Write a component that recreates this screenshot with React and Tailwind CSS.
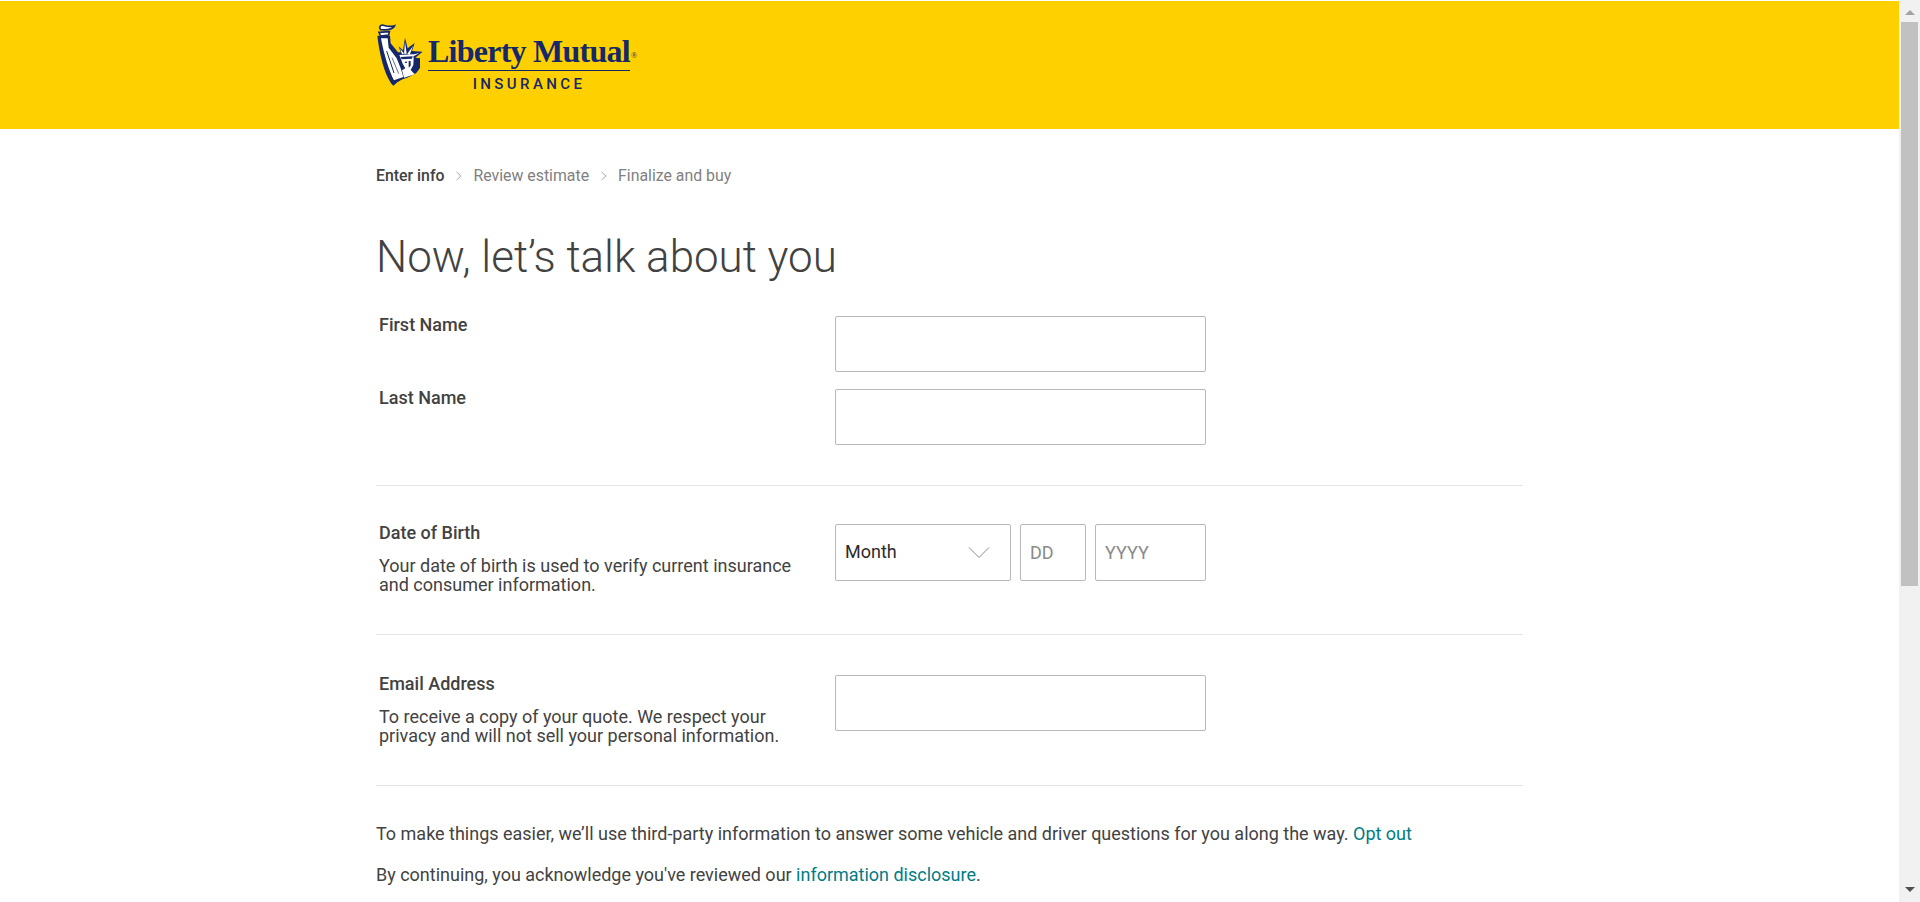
import React from "react";

const NAVY = "#14286b";

const StatueMark = () => (
  <svg width="80" height="75" viewBox="0 0 240 225" className="-ml-[6px] shrink-0">
    {/* shield */}
    <path
      d="M22 62 L60 62 L62 85 L84 112 L92 112 L86 94 L99 106 L105 68 L113 100 L134 84 L126 108 L158 110 L136 128 L150 130 L150 158 C140 178 120 188 100 192 C88 198 78 205 70 212 C48 190 30 130 22 62 Z"
      fill={NAVY}
    />
    {/* raised arm and robe */}
    <path d="M33 70 L53 70 L56 98 L80 130 L92 160 L100 186 L72 196 C58 170 42 120 33 70 Z" fill="#ffffff" />
    <path d="M50 108 L72 174" stroke={NAVY} strokeWidth="3" fill="none" />
    <path d="M66 128 L86 176" stroke={NAVY} strokeWidth="2" fill="none" />
    {/* swoosh at the foot */}
    <path d="M80 203 C98 192 118 188 136 174 C122 194 100 196 74 212 Z" fill="#ffd000" />
    {/* crown rays */}
    <path d="M102 116 L105 80 L110 116 Z" fill="#ffffff" />
    <path d="M112 116 L129 93 L119 120 Z" fill="#ffffff" />
    <path d="M120 121 L148 114 L123 128 Z" fill="#ffffff" />
    <path d="M96 118 L90 100 L102 116 Z" fill="#ffffff" />
    {/* head and shoulders */}
    <path d="M88 120 L128 118 L131 130 L130 150 L122 165 L134 178 L102 188 L96 166 L106 160 L98 146 L92 130 Z" fill="#ffffff" />
    <path d="M92 126 L128 124 L126 131 L95 133 Z" fill={NAVY} />
    <path d="M116 138 L122 138 L122 152 L116 158 Z" fill={NAVY} />
    <path d="M104 140 L112 140 L110 144 L105 144 Z" fill={NAVY} />
    {/* torch */}
    <path d="M27 52 L58 50 L56 60 L32 63 Z" fill="#ffffff" stroke={NAVY} strokeWidth="5" />
    <path
      d="M32 44 C26 36 30 30 38 30 C46 32 56 38 74 32 C70 42 56 46 32 44 Z"
      fill="#ffffff"
      stroke={NAVY}
      strokeWidth="5"
    />
  </svg>
);

const Logo = () => (
  <div className="flex items-start">
    <StatueMark />
    <div className="mt-[20px] -ml-[22px] flex w-[202px] flex-col items-center">
      <span className="w-full whitespace-nowrap border-b border-[#14286b] pb-[2px] font-['Liberation_Serif',serif] text-[32px] leading-[33px] font-bold tracking-[-0.75px] text-[#14286b]">
        Liberty Mutual<sup className="ml-px align-baseline text-[8px] font-normal tracking-normal">®</sup>
      </span>
      <span className="mt-[5px] text-[15px] leading-[16px] font-medium tracking-[3.4px] text-[#14286b]">
        INSURANCE
      </span>
    </div>
  </div>
);

const Chevron = () => (
  <svg width="8" height="12" viewBox="0 0 8 12" fill="none" className="mx-[10.5px]">
    <path d="M1.5 2 L6 6 L1.5 10" stroke="#a8a8a8" strokeWidth="1" />
  </svg>
);

const fieldClass =
  "h-[56px] w-[371px] rounded-[2px] border border-[#b9b9b9] bg-white px-[9px] outline-none";

const Label = ({ children, className = "" }) => (
  <div className={`text-[18px] leading-[20px] font-medium text-[#424242] ${className}`}>{children}</div>
);

const Help = ({ children }) => (
  <p className="mt-[13px] text-[18px] leading-[19px] text-[#424242]">{children}</p>
);

export default function App() {
  return (
    <div className="flex h-screen overflow-hidden bg-white font-['Roboto',sans-serif]">
      <div className="min-w-0 flex-1">
        <header className="mt-px h-[128px] bg-[#ffd000]">
          <div className="mx-auto w-[1147px] pt-[14px]">
            <Logo />
          </div>
        </header>

        <main className="mx-auto w-[1147px]">
          <nav className="mt-[37px] flex items-center text-[15.85px] leading-[20px] text-[#808080]">
            <span className="font-medium text-[#424242]">Enter info</span>
            <Chevron />
            <span>Review estimate</span>
            <Chevron />
            <span>Finalize and buy</span>
          </nav>

          <h1 className="mt-[43px] text-[43.9px] leading-[56px] font-light text-[#424242]">
            Now, let’s talk about you
          </h1>

          <section className="mt-[31px] flex flex-col gap-[17px]">
            <div className="flex">
              <Label className="-mt-[1px] w-[459px] pl-[3px]">First Name</Label>
              <input className={fieldClass} />
            </div>
            <div className="flex">
              <Label className="-mt-[1px] w-[459px] pl-[3px]">Last Name</Label>
              <input className={fieldClass} />
            </div>
          </section>

          <hr className="mt-[40px] border-[#e3e3e3]" />

          <section className="mt-[38px] flex">
            <div className="w-[459px] pl-[3px]">
              <Label className="-mt-[1px]">Date of Birth</Label>
              <Help>
                Your date of birth is used to verify current insurance
                <br />
                and consumer information.
              </Help>
            </div>
            <div className="flex gap-[9px]">
              <div className="flex h-[57px] w-[176px] items-center justify-between rounded-[2px] border border-[#b9b9b9] pl-[9px] pr-[20px] text-[18px] text-[#2b2b2b]">
                <span className="-mt-[2px]">Month</span>
                <svg width="22" height="13" viewBox="0 0 22 13" fill="none">
                  <path d="M1 1.5 L11 11.5 L21 1.5" stroke="#8a8a8a" strokeWidth="1" />
                </svg>
              </div>
              <input
                placeholder="DD"
                className="h-[57px] w-[66px] rounded-[2px] border border-[#b9b9b9] px-[9px] text-[18px] outline-none placeholder:text-[#8a8a8a]"
              />
              <input
                placeholder="YYYY"
                className="h-[57px] w-[111px] rounded-[2px] border border-[#b9b9b9] px-[9px] text-[18px] outline-none placeholder:text-[#8a8a8a]"
              />
            </div>
          </section>

          <hr className="mt-[40px] border-[#e3e3e3]" />

          <section className="mt-[40px] flex">
            <div className="w-[459px] pl-[3px]">
              <Label className="-mt-[1px]">Email Address</Label>
              <Help>
                To receive a copy of your quote. We respect your
                <br />
                privacy and will not sell your personal information.
              </Help>
            </div>
            <input className={fieldClass} />
          </section>

          <hr className="mt-[40px] border-[#e3e3e3]" />

          <p className="mt-[36px] text-[17.99px] leading-[24px] text-[#424242]">
            To make things easier, we’ll use third-party information to answer some vehicle and driver questions for you along the way.{" "}
            <a className="text-[#007c86]">Opt out</a>
          </p>
          <p className="mt-[17px] text-[17.99px] leading-[24px] text-[#424242]">
            By continuing, you acknowledge you've reviewed our{" "}
            <a className="text-[#007c86]">information disclosure</a>.
          </p>
        </main>
      </div>

      {/* scrollbar */}
      <div className="flex h-full w-[21px] shrink-0 flex-col items-center bg-[#f1f1f1]">
        <div className="mt-[10px] h-0 w-0 border-x-[5px] border-b-[5px] border-x-transparent border-b-[#a3a3a3]" />
        <div className="mt-[7px] h-[564px] w-[17px] bg-[#c1c1c1]" />
        <div className="mt-auto mb-[10px] h-0 w-0 border-x-[5px] border-t-[5px] border-x-transparent border-t-[#505050]" />
      </div>
    </div>
  );
}
